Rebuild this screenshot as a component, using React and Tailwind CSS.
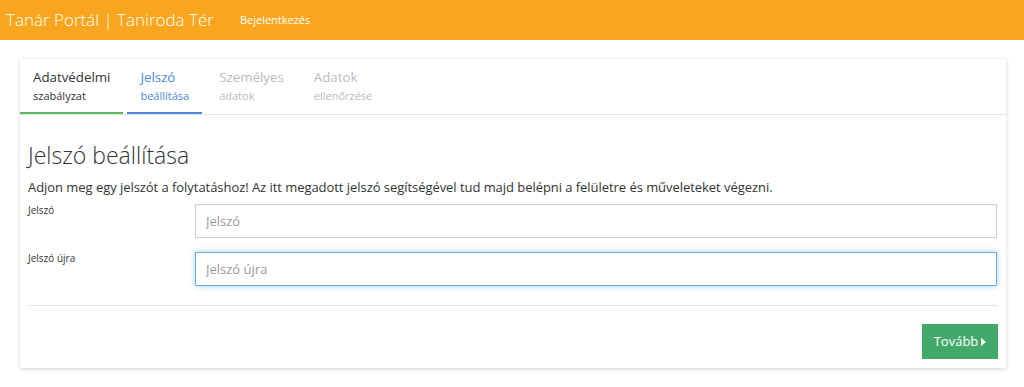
import { useState } from "react";

const steps = [
  { title: "Adatvédelmi", sub: "szabályzat", state: "done" },
  { title: "Jelszó", sub: "beállítása", state: "active" },
  { title: "Személyes", sub: "adatok", state: "todo" },
  { title: "Adatok", sub: "ellenőrzése", state: "todo" },
];

function StepTab({ step }) {
  const border =
    step.state === "done"
      ? "border-[#5cb85c]"
      : step.state === "active"
      ? "border-[#4a89dc]"
      : "border-transparent";
  const color =
    step.state === "done" ? "text-[#333]" : step.state === "active" ? "text-[#4a89dc]" : "text-[#bbb]";
  return (
    <div className={`mr-[4px] border-b-[2px] px-[13px] pt-[9px] pb-[9px] ${border}`}>
      <div className={`text-[13.3px] leading-[18px] ${color}`}>{step.title}</div>
      <div className={`mt-[3px] text-[11px] leading-[14px] ${color}`}>{step.sub}</div>
    </div>
  );
}

export default function App() {
  const [pw, setPw] = useState("");
  const [pw2, setPw2] = useState("");

  return (
    <div className="min-h-[387px] bg-white font-['Open_Sans',sans-serif] text-[#333]">
      <header className="flex h-[40px] items-center bg-[#f9a61f] px-[6px]">
        <span className="text-[17px] font-light text-white">Tanár Portál | Taniroda Tér</span>
        <span className="ml-[26px] text-[11px] text-white">Bejelentkezés</span>
      </header>

      <div className="px-[20px] pt-[19px]">
        <div className="w-[986px] bg-white shadow-[0_1px_4px_rgba(0,0,0,0.18)]">
          <div className="flex border-b border-[#e5e5e5]">
            {steps.map((s) => (
              <StepTab key={s.title} step={s} />
            ))}
          </div>

          <div className="px-[8px] pt-[25px] pb-[9px]">
            <h1 className="text-[23px] font-light leading-[30px] text-[#333]">Jelszó beállítása</h1>
            <p className="mt-[8px] text-[13px] leading-[18px] tracking-[-0.05px]">
              Adjon meg egy jelszót a folytatáshoz! Az itt megadott jelszó segítségével tud majd belépni a
              felületre és műveleteket végezni.
            </p>

            <div className="mt-[8px] flex items-start">
              <label className="w-[167px] text-[10px] leading-[12px]">Jelszó</label>
              <input
                type="password"
                value={pw}
                onChange={(e) => setPw(e.target.value)}
                placeholder="Jelszó"
                className="h-[34px] w-[802px] border border-[#ccc] px-[10px] text-[13px] outline-none placeholder:text-[#999]"
              />
            </div>

            <div className="mt-[14px] flex items-start">
              <label className="w-[167px] text-[10px] leading-[12px]">Jelszó újra</label>
              <input
                type="password"
                value={pw2}
                onChange={(e) => setPw2(e.target.value)}
                placeholder="Jelszó újra"
                className="h-[34px] w-[802px] border border-[#66afe9] px-[10px] text-[13px] outline-none shadow-[0_0_6px_rgba(102,175,233,0.6)] placeholder:text-[#999]"
              />
            </div>

            <hr className="mt-[19px] border-[#e3e3e3]" />

            <div className="mt-[18px] flex justify-end">
              <button className="flex h-[35px] w-[76px] items-center justify-center gap-[3px] bg-[#43a96a] text-[13px] text-white">
                Tovább
                <svg width="5" height="8" viewBox="0 0 5 8">
                  <path d="M0 0 L5 4 L0 8 Z" fill="white" />
                </svg>
              </button>
            </div>
          </div>
        </div>
      </div>
    </div>
  );
}
